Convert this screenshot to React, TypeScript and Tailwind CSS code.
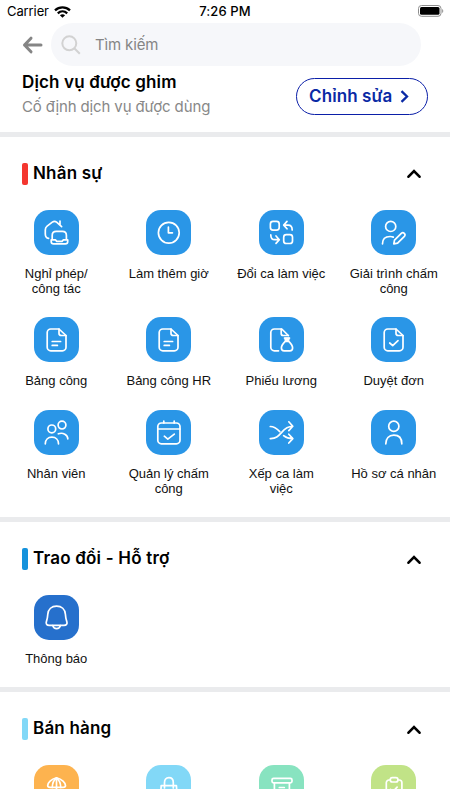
import { useState, type ReactNode } from "react"

interface Service {
  label: string
  icon: ReactNode
  color: string
}

interface SectionProps {
  title: string
  accent: string
  services: Service[]
}

const docPath = "M25 12h-8.2a3.6 3.6 0 0 0-3.6 3.6v14.6a3.6 3.6 0 0 0 3.6 3.6h11.6a3.6 3.6 0 0 0 3.6-3.6V18.5z"
const foldPath = "M25 12v4.2a2.3 2.3 0 0 0 2.3 2.3H32"

const icons = {
  home: (
    <>
      <path d="M14.6 28.4C12.2 28 11.3 26.4 11.3 24v-4c0-1.8.5-2.8 1.8-3.8l5.2-4.1c1.6-1.1 2.8-1.1 4.3 0l5 4.5M26 11v4" />
      <path d="M18.2 29.8v-4.4c0-2.8 1.2-4 4-4h6.2c2.8 0 4 1.2 4 4v4.4M17.2 29.9h4.2l1.4 1.5h5.2l1.4-1.5h4.3v1.5c0 1.6-.8 2.4-2.4 2.4H19.6c-1.6 0-2.4-.8-2.4-2.4z" />
    </>
  ),
  clock: (
    <>
      <circle cx="22.8" cy="22.8" r="10.4" />
      <path d="M22.4 17.2v5.6h4" />
    </>
  ),
  swap: (
    <>
      <rect x="11.4" y="11.4" width="8.8" height="8.8" rx="2.6" />
      <rect x="24.7" y="24.7" width="8.8" height="8.8" rx="2.6" />
      <path d="M28 11.4l-3.3 3.7 3.3 3.7M25 15.1h4.2c2.8 0 4 1.4 4 4.8M17 26l3.3 3.7-3.3 3.7M20 29.7h-4.2c-2.8 0-4-1.4-4-4.8" />
    </>
  ),
  userEdit: (
    <>
      <circle cx="19.7" cy="16.4" r="5.1" />
      <path d="M11.5 33.8c0-4.8 3.2-7.3 7.6-7.3 1.3 0 2.3.2 3.2.6M22.8 33.9l.7-3.8 6.8-6.8a2.2 2.2 0 0 1 3.1 3.1l-6.8 6.8z" />
    </>
  ),
  doc: (
    <>
      <path d={docPath} />
      <path d={foldPath} />
      <path d="M18.2 24.5h8.4M18.2 28.4h5.2" />
    </>
  ),
  docCheck: (
    <>
      <path d={docPath} />
      <path d={foldPath} />
      <path d="M18.7 26l3 2.7 5.3-5.1" />
    </>
  ),
  payslip: (
    <>
      <path d="M19.5 33.8h-4.1a3.6 3.6 0 0 1-3.6-3.6V15.6a3.6 3.6 0 0 1 3.6-3.6h7.4l6.5 6.5" />
      <path d="M22.2 12v4.5c0 1.4.8 2 2 2h5.2M25.5 21h5M26.2 24.4h3.6M26.2 24.4c-2 2-3.8 4.1-3.8 6.6 0 2 1 2.8 2.8 2.8h5.6c1.8 0 2.8-.8 2.8-2.8 0-2.5-1.8-4.6-3.8-6.6z" />
      <path d="M26 21.4l.6 2.5h2.8l.6-2.5z" fill="white" />
    </>
  ),
  users: (
    <>
      <circle cx="17.8" cy="18.9" r="3.9" />
      <circle cx="28" cy="15.1" r="3.9" />
      <path d="M11.3 33.8c0-4 2.6-6.6 6.6-6.6s6.6 2.6 6.6 6.6M24.3 23.8c4.8-1.7 9.5 1 9.5 5" />
    </>
  ),
  calendar: (
    <>
      <rect x="11.8" y="13" width="22.2" height="20.8" rx="3.6" />
      <path d="M12 19h22M17.8 11v2M28.2 11v2M18.3 26.2l3.5 2.9 6.5-5" />
    </>
  ),
  shuffle: (
    <>
      <path d="M11.3 28.6c6.3.2 8.5-3.1 11.6-6.5 2.6-3.2 5.2-5.8 10.8-5.8M29.8 11.8l4 4.4-4 4.4" />
      <path d="M11.3 16.5c4.6 0 6.8 2.3 9.5 5.1M24.6 25.7c2.5 2 5 3 9.1 3M29.8 24.2l4 4.4-4 4.4" />
    </>
  ),
  user: (
    <>
      <circle cx="22.8" cy="16.3" r="5.1" />
      <path d="M14.8 33.8c0-5.4 3-8.6 8-8.6s8 3.2 8 8.6" />
    </>
  ),
  bell: (
    <>
      <path d="M22.6 11.2c-5 0-8.4 3.2-8.8 8-.2 3.2-.4 4.8-1.4 7.4-.9 2.4.6 3.7 2.8 3.7H30c2.2 0 3.7-1.3 2.8-3.7-1-2.6-1.2-4.2-1.4-7.4-.4-4.8-3.8-8-8.8-8z" />
      <path d="M18.8 30.6c.5 2 1.9 3 3.8 3s3.3-1 3.8-3" />
    </>
  ),
  umbrella: (
    <>
      <path d="M22.5 12.8c-5.4 1.5-8.8 5-8.8 7.8 0 1.4 1.2 1.8 2.4 1.8h13c1.2 0 2.4-.4 2.4-1.8 0-2.8-3.6-6.3-9-7.8z" />
      <path d="M22.5 12.8c-2.8 2.2-4.2 5.2-4.2 9.6M22.5 12.8c2.8 2.2 4.2 5.2 4.2 9.6M22.5 12.8V34" />
    </>
  ),
  bag: (
    <>
      <path d="M15.2 20.6h15.2l.9 13H14.3z" />
      <path d="M18.5 23v-5.3c0-3.2 1.5-5 4.4-5s4.4 1.8 4.4 5V23" />
    </>
  ),
  archive: (
    <>
      <rect x="13" y="13.4" width="20" height="4.4" rx="1.6" />
      <path d="M15.4 18v15h15V18M20.3 22.5h5" />
    </>
  ),
  clipboard: (
    <>
      <path d="M19 15h-1a2.7 2.7 0 0 0-2.7 2.7V34h15.6V17.7a2.7 2.7 0 0 0-2.7-2.7h-1" />
      <rect x="19.3" y="12.6" width="7.6" height="4.4" rx="2" />
      <path d="M19.5 24.4l2.4 2.2 4.2-4.4" />
    </>
  ),
}

const hrServices: Service[] = [
  { label: "Nghỉ phép/ công tác", icon: icons.home, color: "bg-[#2a96e7]" },
  { label: "Làm thêm giờ", icon: icons.clock, color: "bg-[#2a96e7]" },
  { label: "Đổi ca làm việc", icon: icons.swap, color: "bg-[#2a96e7]" },
  { label: "Giải trình chấm công", icon: icons.userEdit, color: "bg-[#2a96e7]" },
  { label: "Bảng công", icon: icons.doc, color: "bg-[#2a96e7]" },
  { label: "Bảng công HR", icon: icons.doc, color: "bg-[#2a96e7]" },
  { label: "Phiếu lương", icon: icons.payslip, color: "bg-[#2a96e7]" },
  { label: "Duyệt đơn", icon: icons.docCheck, color: "bg-[#2a96e7]" },
  { label: "Nhân viên", icon: icons.users, color: "bg-[#2a96e7]" },
  { label: "Quản lý chấm công", icon: icons.calendar, color: "bg-[#2a96e7]" },
  { label: "Xếp ca làm việc", icon: icons.shuffle, color: "bg-[#2a96e7]" },
  { label: "Hồ sơ cá nhân", icon: icons.user, color: "bg-[#2a96e7]" },
]

const supportServices: Service[] = [{ label: "Thông báo", icon: icons.bell, color: "bg-[#2670cc]" }]

const salesServices: Service[] = [
  { label: "", icon: icons.umbrella, color: "bg-[#fdb34f]" },
  { label: "", icon: icons.bag, color: "bg-[#82d8f7]" },
  { label: "", icon: icons.archive, color: "bg-[#88e3c0]" },
  { label: "", icon: icons.clipboard, color: "bg-[#c1e387]" },
]

function StatusBar() {
  return (
    <div className="grid h-[23px] shrink-0 grid-cols-3 items-center pl-[7px] pr-[6px] text-[13px] text-black">
      <div className="flex items-center gap-[5px]">
        <span className="tracking-[-0.1px]">Carrier</span>
        <svg width="17" height="12" viewBox="0 0 17 12" fill="none" stroke="black" strokeWidth="2.3">
          <path d="M1 4.3c4.3-4 10.7-4 15 0M3.8 7.3c2.7-2.5 6.7-2.5 9.4 0" />
          <path d="M8.5 11.8L5.9 9.2c1.5-1.4 3.7-1.4 5.2 0z" fill="black" stroke="none" />
        </svg>
      </div>
      <span className="-ml-px text-center font-medium tracking-[0.1px]">7:26 PM</span>
      <svg className="-mt-px justify-self-end" width="26" height="12" viewBox="0 0 26 12" fill="none">
        <rect x="0.5" y="0.5" width="22.5" height="10.8" rx="3" stroke="#8e8e8e" />
        <rect x="2" y="2" width="19.5" height="7.8" rx="1.5" fill="black" />
        <path d="M24.2 4v4c1.4-.7 1.4-3.3 0-4z" fill="#8e8e8e" />
      </svg>
    </div>
  )
}

function ServiceItem({ label, icon, color }: Service) {
  return (
    <button className="flex flex-col items-center">
      <span className={`size-[45px] rounded-[15px] ${color}`}>
        <svg
          viewBox="0 0 45 45"
          className="size-[45px]"
          fill="none"
          stroke="white"
          strokeWidth="1.7"
          strokeLinecap="round"
          strokeLinejoin="round"
        >
          {icon}
        </svg>
      </span>
      <span className="mt-[11px] w-[90px] font-['Liberation_Sans',Arial,sans-serif] text-[13px] leading-[15px] text-[#111]">
        {label}
      </span>
    </button>
  )
}

function Section({ title, accent, services }: SectionProps) {
  const [open, setOpen] = useState(true)

  return (
    <section className="shrink-0 border-t-[5px] border-[#eaebed]">
      <button className="flex h-[72.5px] w-full items-center pt-px pl-[22px] pr-[29px]" onClick={() => setOpen(!open)}>
        <span className={`h-[22px] w-[5.5px] rounded-[2px] ${accent}`} />
        <h2 className="ml-[5.5px] flex-1 text-left text-[17px] font-semibold tracking-[0.2px] text-black">{title}</h2>
        <svg
          className={open ? "" : "rotate-180"}
          width="14"
          height="9"
          viewBox="0 0 14 9"
          fill="none"
          stroke="black"
          strokeWidth="2.6"
          strokeLinecap="round"
        >
          <path d="M1.5 7.7L7 2l5.5 5.7" />
        </svg>
      </button>
      {open && (
        <div className="grid grid-cols-4 items-start gap-y-[21.5px]">
          {services.map((service, i) => (
            <ServiceItem key={i} {...service} />
          ))}
        </div>
      )}
    </section>
  )
}

export default function App() {
  return (
    <div className="h-[800px] bg-white">
      <div className="flex h-[789px] flex-col overflow-hidden font-['Inter',sans-serif]">
        <StatusBar />

        {/* Search */}
        <div className="flex h-[43px] shrink-0 items-center pl-[22px] pr-[29px]">
          <svg width="21" height="18" viewBox="0 0 21 18" fill="none" stroke="#858585" strokeWidth="3">
            <path d="M19 9H2.5M9 2.2L2.5 9 9 15.8" strokeLinecap="round" strokeLinejoin="round" />
          </svg>
          <div className="ml-2 flex h-[43px] flex-1 items-center rounded-full bg-[#f6f7fa] pl-[10px]">
            <svg width="20" height="20" viewBox="0 0 20 20" fill="none" stroke="#d2d2d2" strokeWidth="2">
              <circle cx="8.3" cy="8.3" r="7" />
              <path d="M13.3 13.3l5.5 5.5" />
            </svg>
            <span className="mt-px ml-[14px] text-[15px] tracking-[-0.15px] text-[#858585]">Tìm kiếm</span>
          </div>
        </div>

        {/* Pinned services */}
        <div className="flex h-[66px] shrink-0 justify-between pl-[22px] pr-[22px]">
          <div>
            <h1 className="mt-[4px] text-[17px] leading-6 font-semibold tracking-[0.15px] text-black">
              Dịch vụ được ghim
            </h1>
            <p className="mt-[1px] text-[15px] leading-6 tracking-[-0.12px] text-[#888]">Cố định dịch vụ được dùng</p>
          </div>
          <button className="mt-3 flex h-[37px] w-[132px] items-center gap-2 rounded-full border border-[#0b1fa8] pl-[12px] text-[17px] font-semibold tracking-[0.1px] text-[#0a2aa5]">
            Chỉnh sửa
            <svg width="9" height="13" viewBox="0 0 9 13" fill="none" stroke="#0a2aa5" strokeWidth="2.3">
              <path d="M1.5 1.2L7 6.5l-5.5 5.3" />
            </svg>
          </button>
        </div>

        <div className="h-[385.4px] shrink-0">
          <Section title="Nhân sự" accent="bg-[#f4362f]" services={hrServices} />
        </div>
        <div className="h-[170px] shrink-0">
          <Section title="Trao đổi - Hỗ trợ" accent="bg-[#1592dc]" services={supportServices} />
        </div>
        <Section title="Bán hàng" accent="bg-[#82d8f7]" services={salesServices} />
      </div>
    </div>
  )
}
